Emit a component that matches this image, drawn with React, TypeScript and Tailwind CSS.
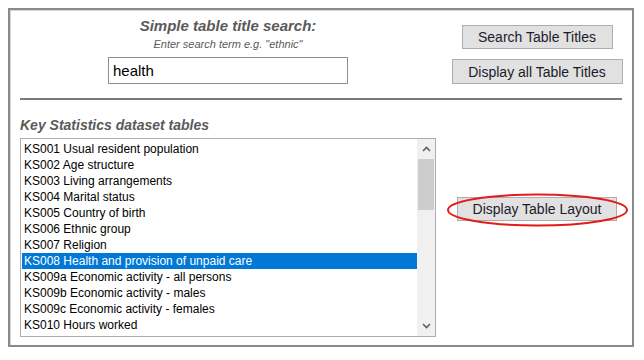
import React from 'react';

const tables = [
  'KS001 Usual resident population',
  'KS002 Age structure',
  'KS003 Living arrangements',
  'KS004 Marital status',
  'KS005 Country of birth',
  'KS006 Ethnic group',
  'KS007 Religion',
  'KS008 Health and provision of unpaid care',
  'KS009a Economic activity - all persons',
  'KS009b Economic activity - males',
  'KS009c Economic activity - females',
  'KS010 Hours worked',
];

const btn =
  'bg-[#e1e1e1] border border-[#adadad] text-[14px] text-[#1c1c2a] leading-none flex items-center justify-center';

const App = () => {
  return (
    <div className="min-h-screen bg-white pt-2 pl-2 font-['Liberation_Sans',Arial,sans-serif]">
      <div className="w-[626px] h-[339px] border-2 border-[#8a8a8a] shadow-[inset_1px_1px_0_#d4d4d4]">
        {/* Search area */}
        <div className="flex h-[88px]">
          <div className="w-[436px] flex flex-col items-center pt-[7px]">
            <h2 className="text-[15px] leading-[18px] font-bold italic text-[#5a5a5a]">
              Simple table title search:
            </h2>
            <p className="mt-[3px] text-[11px] leading-[13px] italic text-[#5a5a5a]">
              Enter search term e.g. "ethnic"
            </p>
            <input
              defaultValue="health"
              className="mt-[6px] w-[240px] h-[27px] border border-[#8f8f8f] px-[4px] text-[15px] text-black outline-none"
            />
          </div>
          <div className="w-[182px] flex flex-col items-center pt-[15px] gap-[10px]">
            <button className={`${btn} w-[151px] h-[24px]`}>Search Table Titles</button>
            <button className={`${btn} w-[171px] h-[25px]`}>Display all Table Titles</button>
          </div>
        </div>

        <div className="mx-[10px] h-[2px] bg-[#7a7a7a]" />

        {/* Dataset list */}
        <div className="flex">
          <div className="w-[436px] pl-[10px]">
            <h3 className="mt-[17px] text-[14px] leading-[16px] font-bold italic text-[#5a5a5a]">
              Key Statistics dataset tables
            </h3>
            <div className="mt-[5px] w-[416px] h-[199px] border border-[#abadb3] flex">
              <ul className="flex-1 pt-[2px] pl-[1px]">
                {tables.map((t, i) => (
                  <li
                    key={t}
                    className={`h-[16px] pl-[2px] text-[12px] leading-[16px] whitespace-nowrap ${
                      i === 7 ? 'bg-[#0078d7] text-white' : 'text-black'
                    }`}
                  >
                    {t}
                  </li>
                ))}
              </ul>
              <div className="w-[18px] bg-[#f0f0f0] flex flex-col items-center">
                <div className="h-[20px] flex items-center justify-center">
                  <svg width="9" height="6" viewBox="0 0 9 6">
                    <path d="M1 5 L4.5 1.5 L8 5" fill="none" stroke="#606060" strokeWidth="1.6" />
                  </svg>
                </div>
                <div className="w-[16px] h-[51px] bg-[#cdcdcd]" />
                <div className="flex-1" />
                <div className="h-[20px] flex items-center justify-center">
                  <svg width="9" height="6" viewBox="0 0 9 6">
                    <path d="M1 1 L4.5 4.5 L8 1" fill="none" stroke="#606060" strokeWidth="1.6" />
                  </svg>
                </div>
              </div>
            </div>
          </div>
          <div className="w-[182px] flex flex-col items-center pt-[97px]">
            <div className="relative">
              <button className={`${btn} w-[160px] h-[24px]`}>Display Table Layout</button>
              <svg
                className="absolute left-[-10px] top-[-4px] pointer-events-none"
                width="181"
                height="34"
                viewBox="0 0 181 34"
              >
                <ellipse cx="90.5" cy="17" rx="89.5" ry="15.5" fill="none" stroke="#e31b1b" strokeWidth="2" />
              </svg>
            </div>
          </div>
        </div>
      </div>
    </div>
  );
};

export default App;
